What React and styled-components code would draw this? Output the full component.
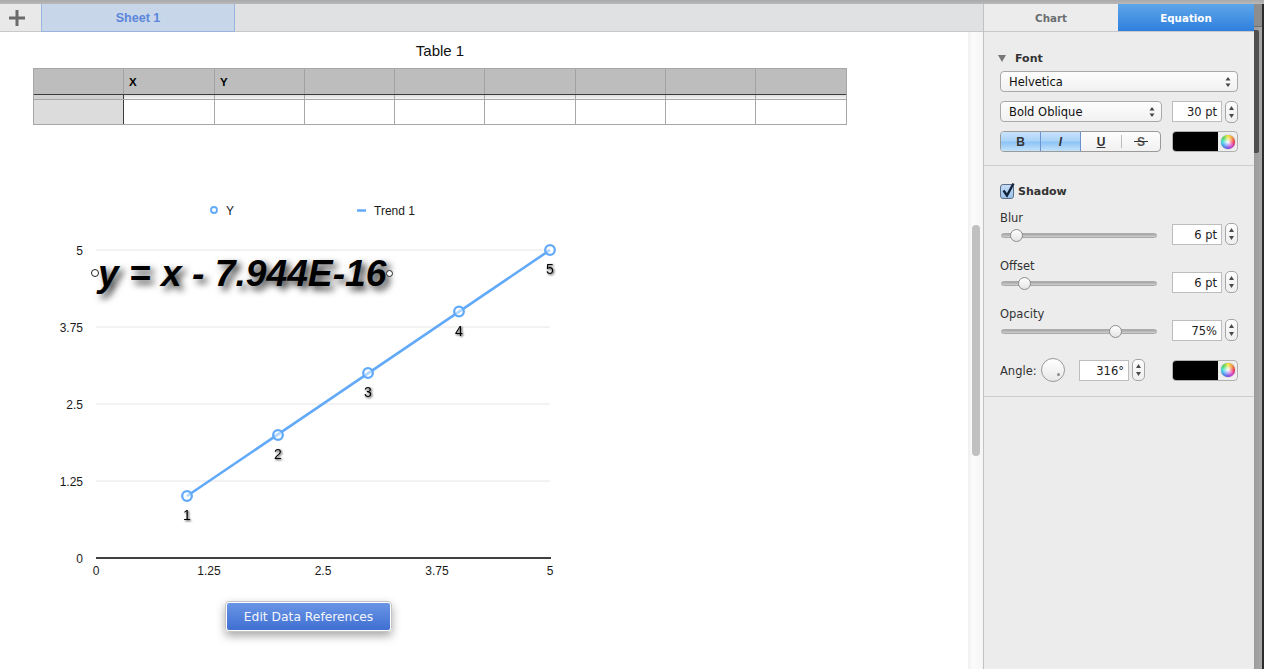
import React from "react";
import styled, { createGlobalStyle } from "styled-components";

const GlobalStyle = createGlobalStyle`
  html, body {
    margin: 0;
    height: 669px;
    overflow: hidden;
    background: #fff;
  }
  #root {
    height: 669px;
  }
  * {
    box-sizing: border-box;
  }
`;

const uiFont = `"DejaVu Sans", sans-serif`;
const chartFont = `"Liberation Sans", Arial, sans-serif`;

const COLUMNS = ["", "X", "Y", "", "", "", "", "", ""];
const COLUMN_WIDTHS = "90px 91px 90px 90px 90px 91px 90px 90px 90px";

const POINTS = [
  { label: "1", x: 187, y: 496 },
  { label: "2", x: 278, y: 435 },
  { label: "3", x: 368, y: 373 },
  { label: "4", x: 459, y: 311.5 },
  { label: "5", x: 550, y: 250 },
];
const Y_TICKS = [
  { label: "5", y: 250 },
  { label: "3.75", y: 327 },
  { label: "2.5", y: 404 },
  { label: "1.25", y: 481 },
];
const X_TICKS = [
  { label: "0", x: 96 },
  { label: "1.25", x: 209 },
  { label: "2.5", x: 323 },
  { label: "3.75", x: 437 },
  { label: "5", x: 550 },
];

function UpDown() {
  return (
    <svg width="6" height="12" viewBox="0 0 6 12">
      <path d="M3 1 L5.500 4.600 H0.500 Z M3 11 L5.500 7.400 H0.500 Z" fill="#444" />
    </svg>
  );
}

function Stepper() {
  return (
    <StepperBox>
      <svg width="7" height="16" viewBox="0 0 7 16">
        <path d="M3.500 2 L6 6 H1 Z M3.500 14 L6 10 H1 Z" fill="#4a4a4a" />
      </svg>
    </StepperBox>
  );
}

function FieldStepper({ value }) {
  return (
    <FieldGroup>
      <Field>{value}</Field>
      <Stepper />
    </FieldGroup>
  );
}

function ColorWell() {
  return (
    <Well>
      <WellSwatch />
      <WellCap>
        <Wheel />
      </WellCap>
    </Well>
  );
}

function SliderRow({ label, thumb, value }) {
  return (
    <SliderBlock>
      <SliderColumn>
        <SmallLabel>{label}</SmallLabel>
        <SliderArea>
          <Track />
          <Thumb $left={thumb} />
        </SliderArea>
      </SliderColumn>
      <FieldStepper value={value} />
    </SliderBlock>
  );
}

export default function App() {
  return (
    <>
      <GlobalStyle />
      <Window>
        <TopStrip />
        <Body>
          <MainColumn>
            <TabBar>
              <AddCell>
                <svg width="16" height="16" viewBox="0 0 16 16">
                  <path d="M6.500 0h3v6.500H16v3H9.500V16h-3V9.500H0v-3h6.500z" fill="#6b6b6b" />
                </svg>
              </AddCell>
              <SheetTab>Sheet 1</SheetTab>
            </TabBar>
            <CanvasRow>
              <Sheet>
                <TableTitle>Table 1</TableTitle>
                <DataTable>
                  <TableRow $height={25}>
                    {COLUMNS.map((name, i) => (
                      <HeadCell key={i}>{name}</HeadCell>
                    ))}
                  </TableRow>
                  <TableRule>
                    {COLUMNS.map((name, i) => (
                      <RuleCell key={i} $first={i === 0} />
                    ))}
                  </TableRule>
                  <TableRow $height={24}>
                    {COLUMNS.map((name, i) => (
                      <BodyCell key={i} $first={i === 0} />
                    ))}
                  </TableRow>
                </DataTable>
                <Chart>
                  <svg width="600" height="390" viewBox="0 200 600 390">
                    <circle cx="214" cy="210" r="3" fill="#fff" stroke="#62aaf8" strokeWidth="1.800" />
                    <ChartText x="226" y="215">Y</ChartText>
                    <line x1="357" y1="210.500" x2="366" y2="210.500" stroke="#62aaf8" strokeWidth="2.500" />
                    <ChartText x="374" y="215">Trend 1</ChartText>

                    {Y_TICKS.map((t) => (
                      <g key={t.label}>
                        <line x1="96" x2="550" y1={t.y} y2={t.y} stroke="#e6e6e6" strokeWidth="1" />
                        <ChartText x="83" y={t.y + 5} textAnchor="end">{t.label}</ChartText>
                      </g>
                    ))}
                    <ChartText x="83" y="563" textAnchor="end">0</ChartText>
                    <line x1="96" x2="551" y1="558" y2="558" stroke="#000" strokeWidth="1.500" />
                    {X_TICKS.map((t) => (
                      <ChartText key={t.label} x={t.x} y="575" textAnchor="middle">{t.label}</ChartText>
                    ))}

                    <line x1="187" y1="496" x2="550" y2="250" stroke="#62aaf8" strokeWidth="2.600" />
                    {POINTS.map((p) => (
                      <g key={p.label}>
                        <circle cx={p.x} cy={p.y} r="4.800" fill="#fff" fillOpacity="0.5" stroke="#62aaf8" strokeWidth="2.300" />
                        <PointLabel x={p.x} y={p.y + 24} textAnchor="middle">{p.label}</PointLabel>
                      </g>
                    ))}
                  </svg>
                  <Equation>y = x - 7.944E-16</Equation>
                  <Handle $left={91} $top={69} />
                  <Handle $left={386} $top={70} $small />
                </Chart>
                <EditButton>Edit Data References</EditButton>
              </Sheet>
              <Gutter>
                <ScrollThumb />
              </Gutter>
            </CanvasRow>
          </MainColumn>

          <Inspector>
            <InspectorTabs>
              <InspectorTab>Chart</InspectorTab>
              <InspectorTab $active>Equation</InspectorTab>
            </InspectorTabs>

            <FontSection>
              <SectionHead>
                <Disclosure />
                Font
              </SectionHead>
              <Select $width={238}>
                Helvetica
                <UpDown />
              </Select>
              <ControlRow>
                <Select $width={162}>
                  Bold Oblique
                  <UpDown />
                </Select>
                <FieldStepper value="30 pt" />
              </ControlRow>
              <ControlRow>
                <FormatGroup>
                  <FormatButton $active>B</FormatButton>
                  <FormatButton $active $italic>I</FormatButton>
                  <FormatButton $underline>U</FormatButton>
                  <FormatButton $strike>S</FormatButton>
                </FormatGroup>
                <ColorWell />
              </ControlRow>
            </FontSection>

            <ShadowSection>
              <CheckRow>
                <CheckBox>
                  <svg width="16" height="17" viewBox="0 0 16 17">
                    <path d="M3.500 8.500 L7 13.500 L13.500 1.500" fill="none" stroke="#10223c" strokeWidth="2.400" />
                  </svg>
                </CheckBox>
                Shadow
              </CheckRow>
              <SliderRow label="Blur" thumb={15} value="6 pt" />
              <SliderRow label="Offset" thumb={23} value="6 pt" />
              <SliderRow label="Opacity" thumb={114} value="75%" />
              <AngleRow>
                <AngleLabel>Angle:</AngleLabel>
                <AngleKnob>
                  <AngleDot />
                </AngleKnob>
                <FieldStepper value="316°" />
                <AngleWell>
                  <ColorWell />
                </AngleWell>
              </AngleRow>
            </ShadowSection>
          </Inspector>

          <WindowEdge>
            <EdgeGray>
              <EdgeTitle />
              <EdgeBand />
            </EdgeGray>
            <EdgeDark />
          </WindowEdge>
        </Body>
      </Window>
    </>
  );
}

const Window = styled.div`
  display: flex;
  flex-direction: column;
  width: 1264px;
  height: 669px;
  overflow: hidden;
`;

const TopStrip = styled.div`
  height: 4px;
  flex-shrink: 0;
  background: linear-gradient(#a9a9a9, #b9b9b9);
`;

const Body = styled.div`
  display: flex;
  flex: 1;
  min-height: 0;
`;

const MainColumn = styled.div`
  display: flex;
  flex-direction: column;
  width: 983px;
`;

const TabBar = styled.div`
  display: flex;
  height: 28px;
  flex-shrink: 0;
  background: #e0e1e3;
  border-bottom: 1px solid #c9c9c9;
`;

const AddCell = styled.div`
  display: flex;
  align-items: center;
  justify-content: center;
  width: 41px;
  padding-right: 7px;
  background: #e9e9e9;
`;

const SheetTab = styled.div`
  display: flex;
  align-items: center;
  justify-content: center;
  width: 194px;
  margin-bottom: -1px;
  padding-top: 1px;
  background: #c8d6e9;
  border: 1px solid #9ab5dd;
  border-top: none;
  color: #5b86dc;
  font: bold 12.500px ${chartFont};
`;

const CanvasRow = styled.div`
  display: flex;
  flex: 1;
  min-height: 0;
`;

const Sheet = styled.div`
  width: 968px;
  padding-top: 10px;
  background: #fff;
`;

const TableTitle = styled.div`
  width: 814px;
  margin-left: 33px;
  height: 18px;
  margin-bottom: 8px;
  text-align: center;
  color: #111;
  font: 15px/18px ${chartFont};
`;

const DataTable = styled.div`
  width: 814px;
  margin-left: 33px;
  border: 1px solid #a6a6a6;
`;

const TableRow = styled.div`
  display: grid;
  grid-template-columns: ${COLUMN_WIDTHS};
  height: ${(props) => props.$height}px;
`;

const TableRule = styled.div`
  display: grid;
  grid-template-columns: ${COLUMN_WIDTHS};
  height: 6px;
  border-top: 1px solid #3c3c3c;
  border-bottom: 1px solid #a8a8a8;
  background: linear-gradient(#dcdcdc, #f6f6f6);
`;

const HeadCell = styled.div`
  display: flex;
  align-items: center;
  padding: 1px 0 0 5px;
  background: #bcbdbc;
  border-right: 1px solid #a2a2a2;
  color: #000;
  font: bold 11.500px ${chartFont};

  &:last-child {
    border-right: none;
  }
`;

const RuleCell = styled.div`
  border-right: 1px solid ${(props) => (props.$first ? "#3c3c3c" : "#a8a8a8")};
  background: ${(props) => (props.$first ? "#d0d0d0" : "transparent")};

  &:last-child {
    border-right: none;
  }
`;

const BodyCell = styled.div`
  background: ${(props) => (props.$first ? "#dcdcdc" : "#fff")};
  border-right: 1px solid ${(props) => (props.$first ? "#3c3c3c" : "#a8a8a8")};

  &:last-child {
    border-right: none;
  }
`;

const Chart = styled.div`
  position: relative;
  width: 600px;
  height: 390px;
  margin-top: 75px;

  svg {
    display: block;
  }
`;

const ChartText = styled.text`
  font: 12px ${chartFont};
  fill: #1a1a1a;
`;

const PointLabel = styled.text`
  font: 14px ${chartFont};
  fill: #000;
  filter: drop-shadow(1px 1px 1px rgba(0, 0, 0, 0.85));
`;

const Equation = styled.div`
  position: absolute;
  left: 98px;
  top: 51px;
  color: #000;
  white-space: nowrap;
  font: italic bold 37.200px/44px ${chartFont};
  text-shadow: 4px 4px 7px rgba(0, 0, 0, 0.8);
`;

const Handle = styled.span`
  position: absolute;
  left: ${(props) => props.$left}px;
  top: ${(props) => props.$top}px;
  width: ${(props) => (props.$small ? 7 : 8)}px;
  height: ${(props) => (props.$small ? 7 : 8)}px;
  background: #fff;
  border: 1px solid #222;
  border-radius: 50%;
`;

const EditButton = styled.div`
  display: flex;
  align-items: center;
  justify-content: center;
  width: 167px;
  height: 31px;
  margin: 11px 0 0 225px;
  border: 2px solid #fff;
  border-radius: 4px;
  outline: 1px solid #c4c4c4;
  outline-offset: -1px;
  background: linear-gradient(#6a95e6, #3f6fd2);
  box-shadow: 0 4px 10px rgba(0, 0, 0, 0.35);
  color: #f4f6fb;
  font: 12.300px ${uiFont};
`;

const Gutter = styled.div`
  width: 15px;
  padding: 193px 3px 0 4px;
  background: linear-gradient(90deg, #f0f0f0, #fbfbfb 30%, #f6f6f6);
`;

const ScrollThumb = styled.div`
  width: 8px;
  height: 231px;
  background: #c0c0c0;
  border-radius: 4px;
`;

const Inspector = styled.div`
  display: flex;
  flex-direction: column;
  width: 271px;
  background: #ececec;
  border-left: 1px solid #c2c2c2;
  color: #222;
  font: 11.500px ${uiFont};
`;

const InspectorTabs = styled.div`
  display: grid;
  grid-template-columns: 134px 136px;
  height: 28px;
  flex-shrink: 0;
  border-bottom: 1px solid #c9c9c9;
`;

const InspectorTab = styled.div`
  display: flex;
  align-items: center;
  justify-content: center;
  padding-top: 1px;
  font-weight: bold;
  font-size: 10.300px;
  color: ${(props) => (props.$active ? "#fff" : "#6b6e71")};
  background: ${(props) =>
    props.$active ? "linear-gradient(#5ea6ea, #2f7fdd)" : "#ececec"};
`;

const FontSection = styled.div`
  display: flex;
  flex-direction: column;
  gap: 9px;
  height: 134px;
  padding: 17px 16px 0 16px;
  border-bottom: 1px solid #cdcdcd;
`;

const SectionHead = styled.div`
  display: flex;
  align-items: center;
  height: 16px;
  margin-top: 1px;
  margin-bottom: -4px;
  font-weight: bold;
  font-size: 11px;
  color: #333;
`;

const Disclosure = styled.span`
  width: 0;
  height: 0;
  margin: 1px 9px 0 -2px;
  border-left: 4.500px solid transparent;
  border-right: 4.500px solid transparent;
  border-top: 7px solid #777;
`;

const Select = styled.div`
  display: flex;
  align-items: center;
  justify-content: space-between;
  width: ${(props) => props.$width}px;
  height: 21px;
  padding: 0 6px 0 8px;
  background: linear-gradient(#fdfdfd, #f1f1f1);
  border: 1px solid #a9a9a9;
  border-radius: 4px;
  color: #111;
`;

const ControlRow = styled.div`
  display: flex;
  justify-content: space-between;
  align-items: center;
  height: 21px;
`;

const FieldGroup = styled.div`
  display: flex;
  align-items: center;
  gap: 3px;
`;

const Field = styled.div`
  display: flex;
  align-items: center;
  justify-content: flex-end;
  width: 50px;
  height: 21px;
  padding: 1px 4px 0 0;
  background: #fff;
  border: 1px solid #bdbdbd;
  color: #222;
`;

const StepperBox = styled.div`
  display: flex;
  align-items: center;
  justify-content: center;
  width: 13px;
  height: 22px;
  background: linear-gradient(#fdfdfd, #eeeeee);
  border: 1px solid #a6a6a6;
  border-radius: 5px;
`;

const FormatGroup = styled.div`
  display: grid;
  grid-template-columns: repeat(4, 40px);
  width: 161px;
  height: 21px;
  overflow: hidden;
  background: linear-gradient(#fdfdfd, #f1f1f1);
  border: 1px solid #9a9a9a;
  border-radius: 4px;
`;

const FormatButton = styled.div`
  position: relative;
  display: flex;
  align-items: center;
  justify-content: center;
  color: #333;
  font: bold 12px ${chartFont};
  font-style: ${(props) => (props.$italic ? "italic" : "normal")};
  text-decoration: ${(props) => (props.$underline ? "underline" : "none")};
  background: ${(props) =>
    props.$active
      ? "linear-gradient(#c9e2fa, #a9d2f8 48%, #8cc2f6 52%, #c3e2fb)"
      : "transparent"};
  border-right: ${(props) => (props.$active ? "1px solid #6c93cf" : "none")};

  /* the S button: a short divider on its left, a strike wider than the letter */
  ${(props) =>
    props.$strike &&
    `
    color: #555;
    &::before {
      content: "";
      position: absolute;
      left: 0;
      top: 3px;
      bottom: 3px;
      width: 1px;
      background: #bcbcbc;
    }
    &::after {
      content: "";
      position: absolute;
      left: 13px;
      right: 13px;
      top: 9px;
      height: 1px;
      background: #333;
    }
  `}
`;

const Well = styled.div`
  display: flex;
  width: 66px;
  height: 21px;
  overflow: hidden;
  border: 1px solid #b0b0b0;
  border-radius: 4px;
  background: #efefef;
`;

const WellSwatch = styled.div`
  width: 46px;
  margin: -1px 0 -1px -1px;
  background: #000;
`;

const WellCap = styled.div`
  display: flex;
  flex: 1;
  align-items: center;
  justify-content: center;
`;

const Wheel = styled.div`
  width: 14px;
  height: 14px;
  border-radius: 50%;
  background: radial-gradient(circle, #fff 0, rgba(255, 255, 255, 0) 68%),
    conic-gradient(#f5e02a, #f08a1e, #e8203c, #d42cc4, #6f3ce0, #2f86f0, #28d3d8, #3fd33f, #f5e02a);
  box-shadow: 0 0 1px #555;
`;

const ShadowSection = styled.div`
  display: flex;
  flex-direction: column;
  gap: 13px;
  height: 231px;
  padding: 18px 16px 0 16px;
  border-bottom: 1px solid #cdcdcd;
`;

const CheckRow = styled.div`
  display: flex;
  align-items: center;
  gap: 4px;
  height: 15px;
  margin-bottom: -2px;
  font-weight: bold;
  font-size: 11px;
  color: #333;
`;

const CheckBox = styled.span`
  position: relative;
  width: 14px;
  height: 15px;
  background: linear-gradient(#c4dcf5, #9cc2ea);
  border: 1px solid #5c6f8a;
  border-radius: 3px;

  svg {
    position: absolute;
    left: -1px;
    top: -3px;
  }
`;

const SliderBlock = styled.div`
  display: flex;
  justify-content: space-between;
  align-items: flex-end;
  height: 35px;
`;

const SliderColumn = styled.div`
  width: 162px;
`;

const SmallLabel = styled.div`
  height: 14px;
  line-height: 16px;
  color: #333;
`;

const SliderArea = styled.div`
  position: relative;
  display: flex;
  align-items: center;
  height: 21px;
  padding: 2px 0 0 1px;
`;

const Track = styled.div`
  width: 156px;
  height: 5px;
  background: linear-gradient(#a5a5a5, #cfcfcf);
  border: 1px solid #ababab;
  border-radius: 3px;
`;

const Thumb = styled.span`
  position: absolute;
  left: ${(props) => props.$left - 5}px;
  top: 5px;
  width: 13px;
  height: 13px;
  background: linear-gradient(#fff, #e4e4e4);
  border: 1px solid #8d8d8d;
  border-radius: 50%;
`;

const AngleRow = styled.div`
  display: flex;
  align-items: center;
  height: 24px;
  margin-top: 4px;
`;

const AngleLabel = styled.div`
  width: 41px;
  padding-top: 1px;
  color: #333;
`;

const AngleKnob = styled.div`
  position: relative;
  width: 24px;
  height: 24px;
  margin-right: 14px;
  background: linear-gradient(#fff, #e8e8e8);
  border: 1px solid #999;
  border-radius: 50%;
`;

const AngleDot = styled.span`
  position: absolute;
  right: 4px;
  bottom: 5px;
  width: 3px;
  height: 3px;
  background: #8a8a8a;
  border-radius: 50%;
`;

const AngleWell = styled.div`
  margin-left: auto;
`;

const WindowEdge = styled.div`
  display: flex;
  width: 10px;
`;

const EdgeGray = styled.div`
  flex: 1;
  background: linear-gradient(90deg, #9c9c9c, #a8a8a8);
`;

const EdgeTitle = styled.div`
  height: 23px;
  background: #8d8d8d;
  border-bottom: 1px solid #6e6e6e;
`;

const EdgeBand = styled.div`
  width: 5px;
  height: 123px;
  margin-top: 3px;
  background: #4f4f4f;
  border-radius: 0 2px 2px 0;
`;

const EdgeDark = styled.div`
  width: 2px;
  background: #2c2c2c;
`;
